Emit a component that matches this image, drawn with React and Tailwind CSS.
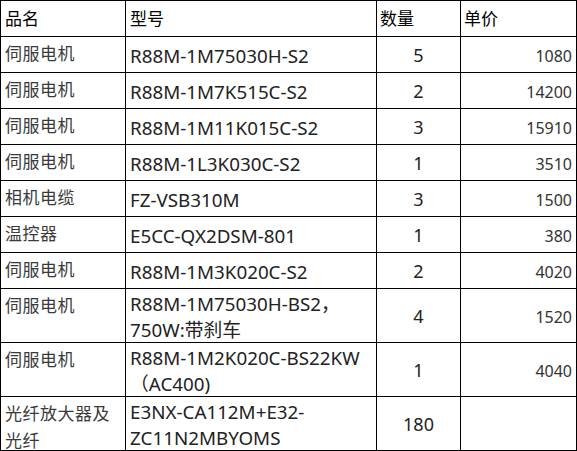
const rows = [
  { name: ["伺服电机"], model: ["R88M-1M75030H-S2"], qty: "5", price: "1080" },
  { name: ["伺服电机"], model: ["R88M-1M7K515C-S2"], qty: "2", price: "14200" },
  { name: ["伺服电机"], model: ["R88M-1M11K015C-S2"], qty: "3", price: "15910" },
  { name: ["伺服电机"], model: ["R88M-1L3K030C-S2"], qty: "1", price: "3510" },
  { name: ["相机电缆"], model: ["FZ-VSB310M"], qty: "3", price: "1500" },
  { name: ["温控器"], model: ["E5CC-QX2DSM-801"], qty: "1", price: "380" },
  { name: ["伺服电机"], model: ["R88M-1M3K020C-S2"], qty: "2", price: "4020" },
  { name: ["伺服电机"], model: ["R88M-1M75030H-BS2，", "750W:带刹车"], qty: "4", price: "1520" },
  { name: ["伺服电机"], model: ["R88M-1M2K020C-BS22KW", "（AC400)"], qty: "1", price: "4040" },
  { name: ["光纤放大器及", "光纤"], model: ["E3NX-CA112M+E32-", "ZC11N2MBYOMS"], qty: "180", price: "" },
];

export default function App() {
  return (
    <div
      className="w-[577px] h-[451px] bg-white overflow-hidden"
      style={{ fontFamily: '"Noto Sans", "Noto Sans CJK SC", sans-serif' }}
    >
      <div className="grid grid-cols-[124px_250px_83px_115px] grid-rows-[repeat(8,35px)_repeat(3,53px)] gap-px bg-black p-px text-[#222]">
        <div className="bg-white flex items-center px-[4px] text-[17px] text-black">品名</div>
        <div className="bg-white flex items-center px-[4px] text-[17px] text-black">型号</div>
        <div className="bg-white flex items-center px-[3px] text-[17px] text-black">数量</div>
        <div className="bg-white flex items-center px-[3px] text-[17px] text-black">单价</div>

        {rows.map((r, i) => (
          <div key={i} className="contents">
            <div className="bg-white flex flex-col px-[4px] pt-[3px] text-[17px] leading-[27px] tracking-[0.5px] text-[#3a3a3a]">
              {r.name.map((n) => (
                <span key={n}>{n}</span>
              ))}
            </div>
            <div className="bg-white flex flex-col justify-center px-[4px] pt-[3px] text-[18.8px] leading-[26px] whitespace-nowrap">
              {r.model.map((m) => (
                <span key={m}>{m}</span>
              ))}
            </div>
            <div className="bg-white flex items-center justify-center pt-[2px] text-[18px]">
              {r.qty}
            </div>
            <div className="bg-white flex items-center justify-end pr-[4px] pt-[2px] text-[16px] text-[#333]">
              {r.price}
            </div>
          </div>
        ))}
      </div>
    </div>
  );
}
